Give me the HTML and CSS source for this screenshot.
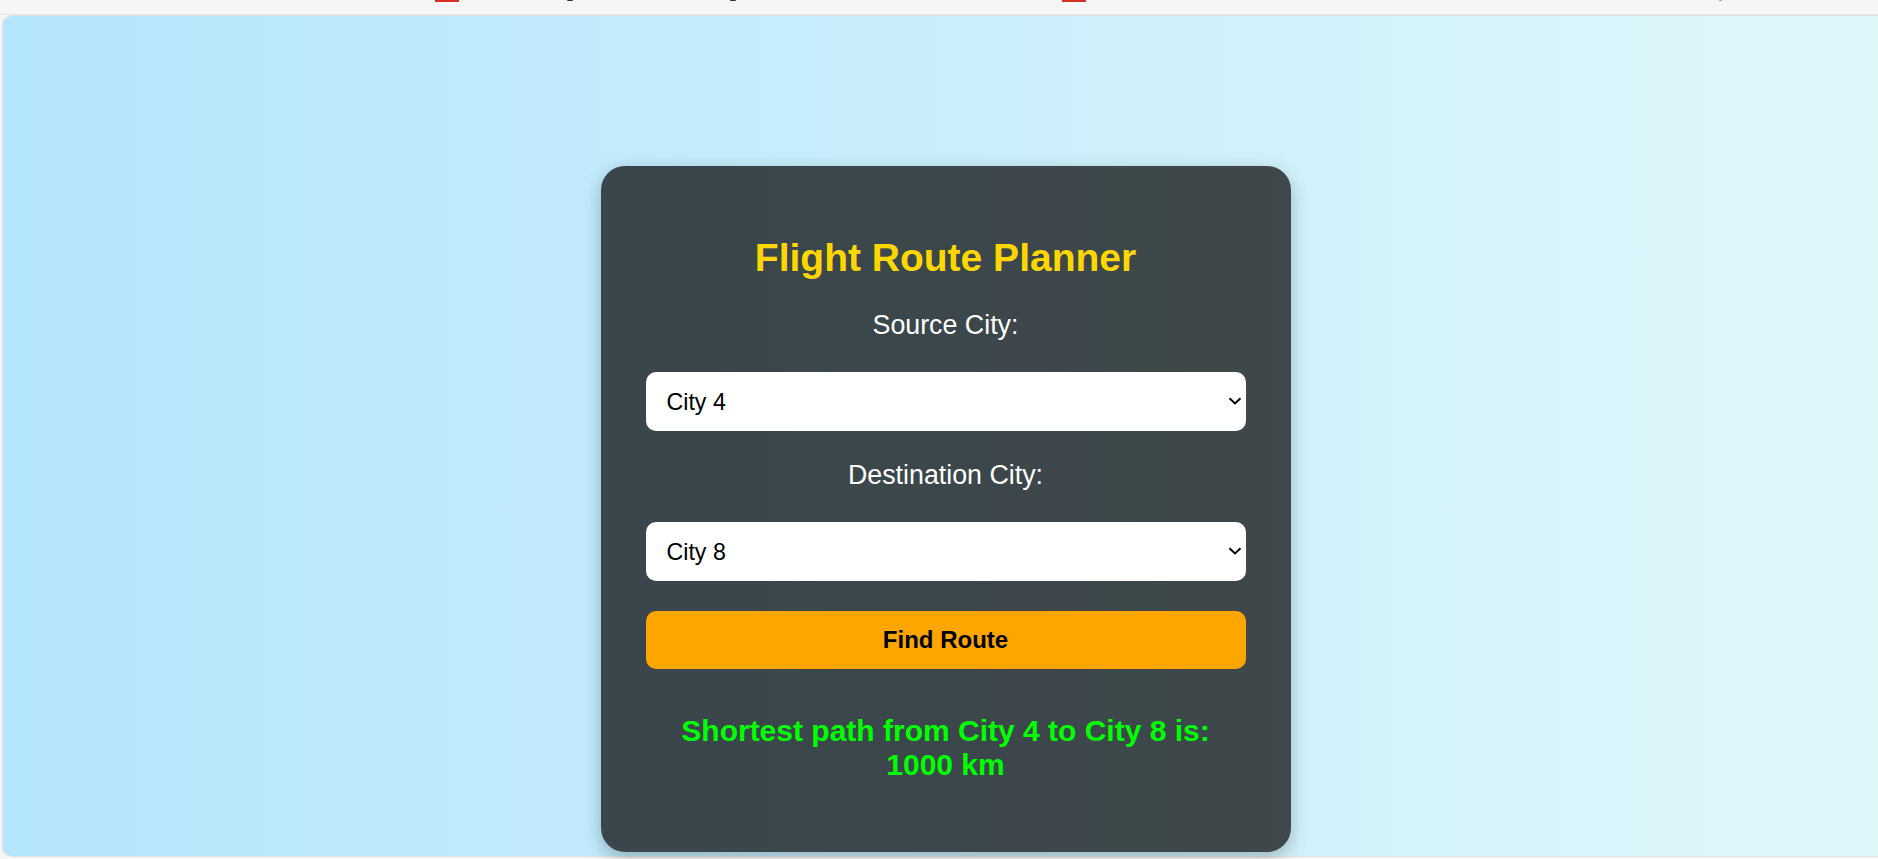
FILE: index.html
```html
<!DOCTYPE html>
<html lang="en">
<head>
<meta charset="UTF-8">
<title>Flight Route Planner</title>
<link rel="stylesheet" href="styles.css">
</head>
<body>
  <div class="strip">
    <span class="mark mark-red m1"></span>
    <span class="mark mark-dark m2"></span>
    <span class="mark mark-dark m3"></span>
    <span class="mark mark-red m4"></span>
    <span class="mark mark-gray m5"></span>
  </div>
  <main class="panel">
    <section class="card">
      <h1 class="title">Flight Route Planner</h1>
      <label class="label" for="source">Source City:</label>
      <div class="select-wrap">
        <select id="source" class="select">
          <option>City 1</option>
          <option>City 2</option>
          <option>City 3</option>
          <option selected>City 4</option>
          <option>City 5</option>
          <option>City 6</option>
          <option>City 7</option>
          <option>City 8</option>
        </select>
        <svg class="chevron" width="14" height="8" viewBox="0 0 14 8"><path d="M1.5 1.2 L7 6.4 L12.5 1.2" fill="none" stroke="#000" stroke-width="2"/></svg>
      </div>
      <label class="label label-dest" for="dest">Destination City:</label>
      <div class="select-wrap">
        <select id="dest" class="select">
          <option>City 1</option>
          <option>City 2</option>
          <option>City 3</option>
          <option>City 4</option>
          <option>City 5</option>
          <option>City 6</option>
          <option>City 7</option>
          <option selected>City 8</option>
        </select>
        <svg class="chevron" width="14" height="8" viewBox="0 0 14 8"><path d="M1.5 1.2 L7 6.4 L12.5 1.2" fill="none" stroke="#000" stroke-width="2"/></svg>
      </div>
      <button class="btn" type="button">Find Route</button>
      <div class="result">Shortest path from City 4 to City 8 is: 1000 km</div>
    </section>
  </main>
</body>
</html>
```
FILE: styles.css
```css
html, body {
  margin: 0;
  padding: 0;
}
body {
  background: #f6f6f6;
  font-family: "Liberation Sans", Arial, sans-serif;
  overflow: hidden;
  height: 859px;
}
.strip {
  height: 14px;
  display: flex;
  align-items: flex-start;
  border-bottom: 1px solid #e6e6e6;
}
.mark {
  display: block;
  height: 1px;
  flex: none;
}
.mark-red { background: #d93025; width: 24px; height: 2px; }
.mark-dark { background: #333; width: 6px; border-radius: 0 0 3px 3px; }
.mark-gray { background: #aaa; width: 3px; }
.m1 { margin-left: 435px; }
.m2 { margin-left: 108px; }
.m3 { margin-left: 157px; }
.m4 { margin-left: 326px; }
.m5 { margin-left: 633px; }

.panel {
  margin-left: 2px;
  width: 1886px;
  box-sizing: border-box;
  padding: 151px 0 4px;
  background: linear-gradient(to right, #b3e5fc, #e0f7fa);
  border: 1px solid #e2e2e2;
  border-right: none;
  border-radius: 10px 0 0 10px;
  display: flex;
  justify-content: center;
}
.card {
  width: 690px;
  box-sizing: border-box;
  padding: 45px;
  background: rgba(0, 0, 0, 0.7);
  border-radius: 24px;
  box-shadow: 0 6px 18px rgba(0, 0, 0, 0.25);
  text-align: center;
  display: flex;
  flex-direction: column;
  margin-top: -1px;
}
.title {
  margin: 25px 0 30px;
  font-size: 39px;
  line-height: 44px;
  font-weight: bold;
  color: #ffd700;
}
.label {
  display: block;
  font-size: 26.8px;
  line-height: 30px;
  color: #ffffff;
  margin-bottom: 32px;
}
.label-dest {
  margin-top: 29px;
}
.select-wrap {
  position: relative;
  height: 59px;
}
.select {
  appearance: none;
  -webkit-appearance: none;
  display: block;
  width: 100%;
  height: 59px;
  box-sizing: border-box;
  border: none;
  border-radius: 10px;
  background: #ffffff;
  color: #000;
  font-family: "Liberation Sans", Arial, sans-serif;
  font-size: 23.2px;
  padding: 0 40px 0 21px;
  outline: none;
}
.chevron {
  position: absolute;
  right: 4px;
  top: 25px;
  pointer-events: none;
}
.btn {
  margin-top: 30px;
  height: 58px;
  border: none;
  border-radius: 10px;
  background: #ffa500;
  color: #000;
  font-family: "Liberation Sans", Arial, sans-serif;
  font-size: 24px;
  font-weight: bold;
  cursor: pointer;
}
.result {
  margin: 45px 0 25px;
  font-size: 30px;
  line-height: 34px;
  font-weight: bold;
  color: #00ff00;
}
```
